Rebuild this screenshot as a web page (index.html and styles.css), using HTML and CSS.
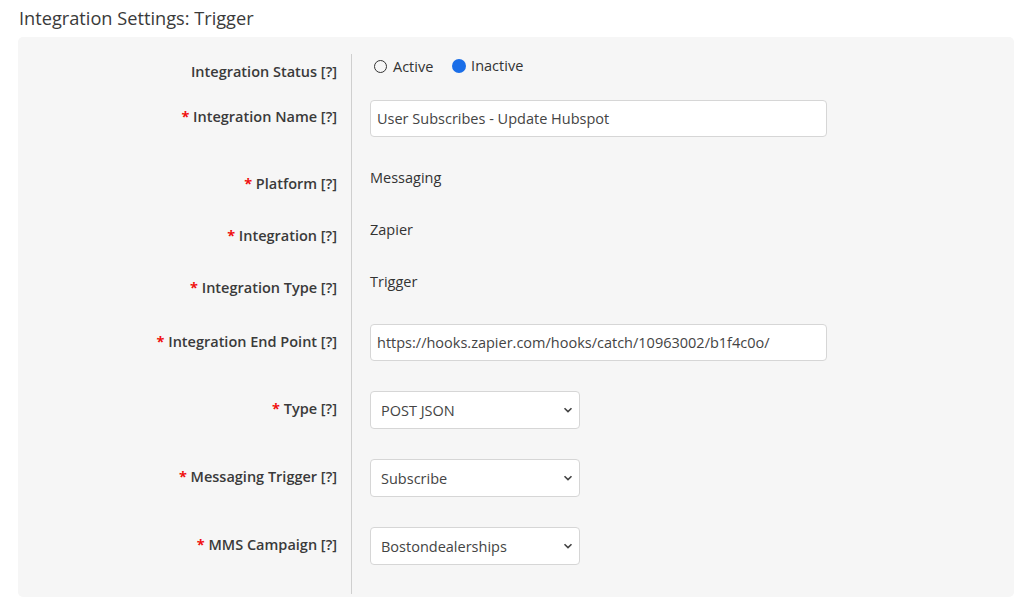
FILE: index.html
```html
<!DOCTYPE html>
<html>
<head>
<meta charset="utf-8">
<link rel="stylesheet" href="styles.css">
</head>
<body>
<h2 class="title">Integration Settings: Trigger</h2>
<div class="panel">
  <div class="row row-status">
    <div class="label">Integration Status [?]</div>
    <div class="value">
      <span class="radio"><span class="dot"></span>Active</span>
      <span class="radio"><span class="dot dot-on"></span>Inactive</span>
    </div>
  </div>
  <div class="row row-input">
    <div class="label"><span class="req">*</span> Integration Name [?]</div>
    <div class="value"><input class="field" type="text" value="User Subscribes - Update Hubspot"></div>
  </div>
  <div class="row row-text">
    <div class="label"><span class="req">*</span> Platform [?]</div>
    <div class="value">Messaging</div>
  </div>
  <div class="row row-text">
    <div class="label"><span class="req">*</span> Integration [?]</div>
    <div class="value">Zapier</div>
  </div>
  <div class="row row-text">
    <div class="label"><span class="req">*</span> Integration Type [?]</div>
    <div class="value">Trigger</div>
  </div>
  <div class="row row-url">
    <div class="label"><span class="req">*</span> Integration End Point [?]</div>
    <div class="value"><input class="field" type="text" value="https://hooks.zapier.com/hooks/catch/10963002/b1f4c0o/"></div>
  </div>
  <div class="row row-select">
    <div class="label"><span class="req">*</span> Type [?]</div>
    <div class="value"><select class="dropdown"><option>POST JSON</option></select></div>
  </div>
  <div class="row row-select">
    <div class="label"><span class="req">*</span> Messaging Trigger [?]</div>
    <div class="value"><select class="dropdown"><option>Subscribe</option></select></div>
  </div>
  <div class="row row-select row-last">
    <div class="label"><span class="req">*</span> MMS Campaign [?]</div>
    <div class="value"><select class="dropdown"><option>Bostondealerships</option></select></div>
  </div>
</div>
</body>
</html>
```
FILE: styles.css
```css
html, body {
  margin: 0;
  padding: 0;
  background: #ffffff;
  font-family: "Open Sans", "Liberation Sans", sans-serif;
  color: #333333;
}

.title {
  margin: 0;
  padding: 5px 0 0 19px;
  height: 32px;
  box-sizing: border-box;
  font-size: 18.2px;
  font-weight: 400;
  line-height: 26px;
  color: #3a3a3a;
}

.panel {
  margin: 5px 10px 0 18px;
  padding: 17px 0 3px 0;
  background: #f6f6f6;
  border-radius: 5px;
}

.row {
  display: flex;
  font-size: 14.5px;
  line-height: 20px;
}

.label {
  width: 333px;
  flex: none;
  box-sizing: border-box;
  padding-right: 14px;
  text-align: right;
  font-weight: 600;
  color: #3a3a3a;
}

.req {
  color: #f01010;
  font-weight: 700;
}

.value {
  flex: 1;
  border-left: 1px solid #cfcfcf;
  padding-left: 18px;
  color: #333333;
}

.row-status { height: 36px; }
.row-status .label { padding-top: 8px; }
.row-status .value { padding-top: 2px; }

.row-input { height: 60px; }
.row-input .label { padding-top: 17px; }
.row-input .value { padding-top: 10px; }

.row-text { height: 52px; }
.row-text .label { padding-top: 24px; }
.row-text .value { padding-top: 18px; }

.row-url { height: 66px; }
.row-url .label { padding-top: 26px; }
.row-url .value { padding-top: 18px; }

.row-select { height: 68px; }
.row-select .label { padding-top: 27px; }
.row-select .value { padding-top: 19px; }
.row-last { height: 86px; }

.radio {
  display: inline-flex;
  align-items: center;
  margin-right: 15px;
  color: #333333;
}

.dot {
  width: 13px;
  height: 13px;
  box-sizing: border-box;
  border: 1.5px solid #333333;
  border-radius: 50%;
  margin: 0 6px 0 4px;
  display: inline-block;
}

.dot-on {
  width: 14px;
  height: 14px;
  border: none;
  background: #1a6ee8;
  margin: 0 5px 0 0;
}

.field {
  width: 457px;
  height: 37px;
  box-sizing: border-box;
  border: 1px solid #d6d6d6;
  border-radius: 4px;
  background: #ffffff;
  padding: 0 6px;
  font-family: "Open Sans", "Liberation Sans", sans-serif;
  font-size: 14.5px;
  color: #444444;
  margin: 0;
}

.dropdown {
  -webkit-appearance: none;
  appearance: none;
  width: 210px;
  height: 38px;
  box-sizing: border-box;
  border: 1px solid #d6d6d6;
  border-radius: 4px;
  background: #ffffff url("data:image/svg+xml;utf8,<svg xmlns='http://www.w3.org/2000/svg' width='10' height='6' viewBox='0 0 10 6'><path d='M1.5 1.2 L5 4.6 L8.5 1.2' fill='none' stroke='%23444' stroke-width='1.6'/></svg>") no-repeat right 6px center;
  padding: 0 24px 0 10px;
  font-family: "Open Sans", "Liberation Sans", sans-serif;
  font-size: 14.5px;
  color: #444444;
  margin: 0;
}
```
